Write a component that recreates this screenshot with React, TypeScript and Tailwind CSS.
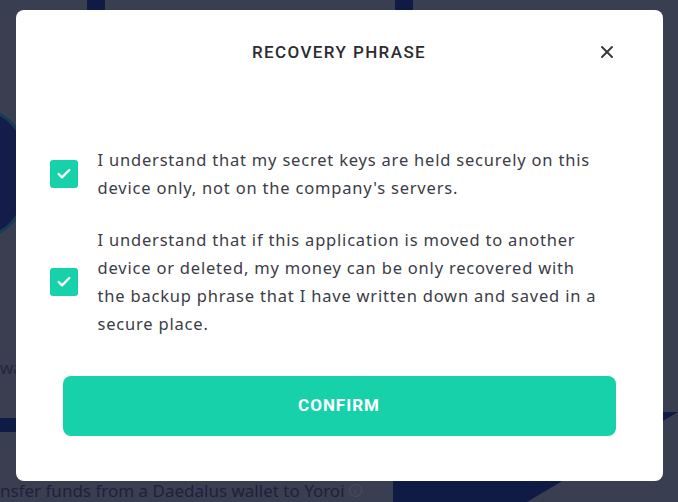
import { Check, X } from "lucide-react";

const items = [
  "I understand that my secret keys are held securely on this device only, not on the company's servers.",
  "I understand that if this application is moved to another device or deleted, my money can be only recovered with the backup phrase that I have written down and saved in a secure place.",
];

export default function App() {
  return (
    <div className="relative w-[678px] h-[502px] overflow-hidden bg-[#3a3e51] font-['Noto_Sans',sans-serif]">
      {/* page behind the overlay */}
      <div className="absolute left-[87px] top-0 w-[18px] h-[20px] bg-[#101b45]" />
      <div className="absolute left-[395px] top-0 w-[18px] h-[20px] bg-[#101b45]" />
      <div className="absolute -left-[70px] top-[108px] w-[95px] h-[130px] rounded-[45px] bg-[#141d4a] border-[3px] border-[#173b55]" />
      <div className="absolute left-0 top-[418px] w-[40px] h-[14px] bg-[#101b45]" />
      <svg className="absolute left-0 top-0" width="678" height="502">
        <polygon points="393,415 678,412 527,502 393,502" fill="#101b45" />
      </svg>
      <p className="absolute left-0 top-[355px] text-[17px] text-[#23273d]">wa</p>
      <p className="absolute left-0 top-[478px] flex items-center gap-1 text-[17px] text-[#1d223b] whitespace-nowrap">
        nsfer funds from a Daedalus wallet to Yoroi
        <span className="w-[13px] h-[13px] rounded-full border border-[#4a4f66] text-[9px] leading-[11px] text-center text-[#4a4f66]">i</span>
      </p>

      {/* dialog */}
      <div className="absolute inset-0 flex justify-center pt-[10px]">
        <div className="w-[647px] h-[471px] bg-white rounded-lg flex flex-col">
          <div className="relative pt-[30px] flex justify-center">
            <h2 className="font-['Roboto',sans-serif] text-[17px] leading-6 font-medium tracking-[1.4px] text-[#2b2c32]">
              RECOVERY PHRASE
            </h2>
            <button className="absolute right-[46px] top-[32px] text-[#38393d]">
              <X className="w-5 h-5" strokeWidth={2.4} />
            </button>
          </div>

          <div className="mt-[82px] pl-[34px] flex flex-col gap-6">
            {items.map((text) => (
              <div key={text} className="flex items-center gap-5">
                <span className="shrink-0 w-7 h-7 rounded-[3px] bg-[#17d1aa] flex items-center justify-center">
                  <Check className="w-4 h-4 text-white" strokeWidth={3.5} />
                </span>
                <p className="w-[510px] text-[16.5px] leading-7 tracking-[0.8px] text-[#3b3c45]">{text}</p>
              </div>
            ))}
          </div>

          <div className="mt-[38px] px-[47px]">
            <button className="w-full h-[60px] rounded-lg bg-[#17d1aa] text-white font-['Roboto',sans-serif] text-[17px] font-bold tracking-[1px]">
              CONFIRM
            </button>
          </div>
        </div>
      </div>
    </div>
  );
}
